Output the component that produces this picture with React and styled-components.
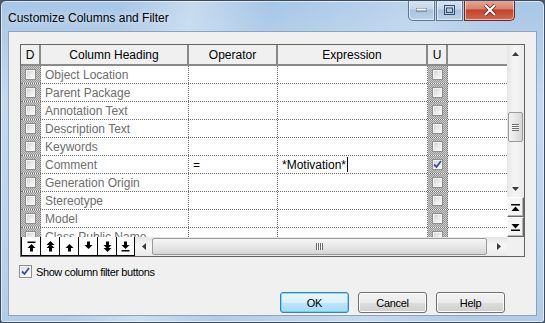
import styled, { createGlobalStyle, css } from 'styled-components'

const GlobalStyle = createGlobalStyle`
  html, body {
    margin: 0;
    padding: 0;
    background: #4a5a6c;
  }
  body {
    width: 545px;
    height: 323px;
    overflow: hidden;
    font-family: "Liberation Sans", Arial, sans-serif;
  }
`

const COLS = '20px 148px 89px 150px 20px 1fr'

const rows = [
  { name: 'Object Location' },
  { name: 'Parent Package' },
  { name: 'Annotation Text' },
  { name: 'Description Text' },
  { name: 'Keywords' },
  { name: 'Comment', op: '=', expr: '*Motivation*', u: true, editing: true },
  { name: 'Generation Origin' },
  { name: 'Stereotype' },
  { name: 'Model' },
  { name: 'Class Public Name' },
]

const Arrow = ({ kind }) => {
  const up = 'M4.5 3 L8.5 7 H6 V10.5 H3 V7 H0.5 Z'
  const shapes = {
    top: (
      <>
        <rect x="0.5" y="0.5" width="8" height="1.5" />
        <path d={up} />
      </>
    ),
    double: (
      <>
        <path d="M4.5 0 L8.5 4 H0.5 Z" />
        <path d={up} />
      </>
    ),
    one: <path d={up} />,
  }
  const flip = kind.startsWith('down')
  const base = kind.replace('down-', '').replace('up-', '')
  return (
    <svg width="9" height="11" viewBox="0 0 9 11" fill="#000">
      <g transform={flip ? 'translate(0 11) scale(1 -1)' : undefined}>{shapes[base]}</g>
    </svg>
  )
}

const Tri = ({ dir, size = 7 }) => {
  const d = {
    up: 'M0 4 L3.5 0 L7 4 Z',
    down: 'M0 0 L3.5 4 L7 0 Z',
    left: 'M4 0 L0 3.5 L4 7 Z',
    right: 'M0 0 L4 3.5 L0 7 Z',
  }[dir]
  const vertical = dir === 'up' || dir === 'down'
  return (
    <svg width={vertical ? size : 4} height={vertical ? 4 : size} viewBox={vertical ? '0 0 7 4' : '0 0 4 7'}>
      <path d={d} fill="#3a3a3a" />
    </svg>
  )
}

const Check = ({ size = 9 }) => (
  <svg width={size} height={size} viewBox="0 0 9 9">
    <path d="M1 4.5 L3.5 7 L8 1" fill="none" stroke="#3c4f8c" strokeWidth="1.8" />
  </svg>
)

const CaptionButtons = () => (
  <Captions>
    <Caption>
      <svg width="11" height="4"><rect x="0" y="0" width="11" height="3" fill="#fff" stroke="#3d4d63" strokeWidth="0.8" /></svg>
    </Caption>
    <Caption>
      <svg width="11" height="10"><rect x="0.5" y="0.5" width="10" height="9" fill="none" stroke="#3d4d63" strokeWidth="1" /><rect x="2.5" y="3" width="6" height="4.5" fill="none" stroke="#3d4d63" strokeWidth="1" /></svg>
    </Caption>
    <Caption $close>
      <svg width="14" height="12" viewBox="0 0 14 12">
        <path d="M2 1 L12 11 M12 1 L2 11" stroke="#5b1d15" strokeWidth="3.6" />
        <path d="M2 1 L12 11 M12 1 L2 11" stroke="#fff" strokeWidth="2.2" />
      </svg>
    </Caption>
  </Captions>
)

export default function App() {
  return (
    <>
      <GlobalStyle />
      <Window>
        <TitleBar>
          <Title>Customize Columns and Filter</Title>
          <CaptionButtons />
        </TitleBar>
        <Client>
          <Panel>
            <Viewport>
              <HeaderRow>
                <HeadCell>D</HeadCell>
                <HeadCell>Column Heading</HeadCell>
                <HeadCell>Operator</HeadCell>
                <HeadCell>Expression</HeadCell>
                <HeadCell>U</HeadCell>
                <HeadCell $last />
              </HeaderRow>
              {rows.map(r => (
                <Row key={r.name}>
                  <BoxCell><CellBox /></BoxCell>
                  <Cell $muted>{r.name}</Cell>
                  <Cell>{r.op}</Cell>
                  <Cell>
                    {r.expr}
                    {r.editing && <Caret />}
                  </Cell>
                  <BoxCell><CellBox>{r.u && <Check />}</CellBox></BoxCell>
                  <Cell $last />
                </Row>
              ))}
            </Viewport>
            <VScroll>
              <ArrowBtn><Tri dir="up" /></ArrowBtn>
              <VTrack><VThumb><Grip $vertical /></VThumb></VTrack>
              <ArrowBtn><Tri dir="down" /></ArrowBtn>
              <JumpBtn>
                <svg width="9" height="7" viewBox="0 0 9 7"><rect x="0" y="0" width="9" height="1.5" /><path d="M0.5 7 L4.5 2.5 L8.5 7 Z" /></svg>
              </JumpBtn>
              <JumpBtn>
                <svg width="9" height="7" viewBox="0 0 9 7"><path d="M0.5 0 L4.5 4.5 L8.5 0 Z" /><rect x="0" y="5.5" width="9" height="1.5" /></svg>
              </JumpBtn>
            </VScroll>
            <BottomBar>
              <NavButtons>
                {['up-top', 'up-double', 'up-one', 'down-one', 'down-double', 'down-top'].map(k => (
                  <NavBtn key={k}><Arrow kind={k} /></NavBtn>
                ))}
              </NavButtons>
              <HScroll>
                <ArrowBtn $h><Tri dir="left" /></ArrowBtn>
                <HTrack><HThumb><Grip /></HThumb></HTrack>
                <ArrowBtn $h><Tri dir="right" /></ArrowBtn>
              </HScroll>
            </BottomBar>
            <Corner />
          </Panel>
          <CheckRow>
            <CheckBox><Check /></CheckBox>
            <span>Show column filter buttons</span>
          </CheckRow>
          <Buttons>
            <Button $default>OK</Button>
            <Button>Cancel</Button>
            <Button>Help</Button>
          </Buttons>
        </Client>
      </Window>
    </>
  )
}

const Window = styled.div`
  width: 545px;
  height: 323px;
  box-sizing: border-box;
  display: flex;
  flex-direction: column;
  border: 1px solid #3c4c60;
  border-radius: 6px 6px 3px 3px;
  background:
    linear-gradient(100deg, rgba(255,255,255,0.0) 20%, rgba(255,255,255,0.35) 32%, rgba(255,255,255,0) 45%, rgba(255,255,255,0.25) 70%, rgba(255,255,255,0) 85%),
    linear-gradient(180deg, #a7c6e6 0%, #c3d9f0 30%, #bcd4ee 70%, #b2cce8 100%);
  box-shadow: inset 0 0 0 1px rgba(255,255,255,0.6);
  overflow: hidden;
`

const TitleBar = styled.div`
  height: 30px;
  display: flex;
  align-items: flex-start;
  flex-shrink: 0;
`

const Title = styled.div`
  font-size: 12px;
  color: #000;
  padding: 10px 0 0 7px;
  text-shadow: 0 0 6px rgba(255,255,255,0.9);
`

const Captions = styled.div`
  margin-left: auto;
  margin-right: 29px;
  margin-top: -1px;
  display: flex;
  gap: 1px;
  height: 21px;
`

const Caption = styled.div`
  width: 27px;
  box-sizing: border-box;
  display: flex;
  align-items: center;
  justify-content: center;
  border: 1px solid #5f7590;
  border-top: none;
  background: linear-gradient(180deg, #d7e5f4 0%, #c3d6ec 45%, #a9c2df 50%, #bcd2ea 100%);
  box-shadow: inset 0 0 0 1px rgba(255,255,255,0.55);
  &:first-child { border-bottom-left-radius: 5px; }
  ${p => p.$close && css`
    width: 51px;
    border-color: #6b2a20;
    border-bottom-right-radius: 5px;
    background: linear-gradient(180deg, #e9a99b 0%, #d7806d 45%, #c2412c 50%, #d1694f 100%);
  `}
`

const Client = styled.div`
  flex: 1;
  margin: 0 7px 6px 7px;
  border: 1px solid #8ba3bd;
  background: #f0f0f0;
  padding: 12px 0 0 11px;
  display: flex;
  flex-direction: column;
`

const Panel = styled.div`
  width: 505px;
  height: 213px;
  box-sizing: border-box;
  border: 1px solid #646464;
  display: grid;
  grid-template-columns: 486px 17px;
  grid-template-rows: 192px 19px;
  background: #fff;
`

const Viewport = styled.div`
  overflow: hidden;
  background: #fff;
`

const HeaderRow = styled.div`
  display: grid;
  grid-template-columns: ${COLS};
  height: 21px;
  box-sizing: border-box;
  border-bottom: 2px solid #8a8a8a;
  background: #f0f0f0;
`

const HeadCell = styled.div`
  display: flex;
  align-items: center;
  justify-content: center;
  font-size: 12px;
  color: #000;
  border-right: 2px solid #8a8a8a;
  ${p => p.$last && css`border-right: none;`}
`

const Row = styled.div`
  display: grid;
  grid-template-columns: ${COLS};
  height: 18px;
  box-sizing: border-box;
  border-bottom: 1px dotted #6f6f6f;
`

const Cell = styled.div`
  display: flex;
  align-items: center;
  padding-left: 4px;
  font-size: 12px;
  color: ${p => (p.$muted ? '#6d6d6d' : '#000')};
  border-right: 1px dotted #6f6f6f;
  white-space: nowrap;
  overflow: hidden;
  ${p => p.$last && css`border-right: none;`}
`

const Caret = styled.span`
  display: inline-block;
  width: 1px;
  height: 15px;
  background: #000;
  margin-left: 1px;
`

const BoxCell = styled.div`
  display: flex;
  align-items: center;
  justify-content: center;
  background: repeating-conic-gradient(#9a9a9a 0 25%, #c8c8c8 0 50%) 0 0 / 2px 2px;
  border-right: 1px dotted #6f6f6f;
`

const CellBox = styled.div`
  width: 11px;
  height: 11px;
  box-sizing: border-box;
  border: 1px solid #8e8e8e;
  background: linear-gradient(135deg, #d0d0d0 0%, #eeeeee 60%, #fbfbfb 100%);
  display: flex;
  align-items: center;
  justify-content: center;
  box-shadow: inset 0 0 0 1px #f4f4f4;
`

const VScroll = styled.div`
  display: flex;
  flex-direction: column;
  background: linear-gradient(90deg, #e6e6e6, #f4f4f4 40%, #f4f4f4 60%, #e9e9e9);
`

const ArrowBtn = styled.div`
  width: 17px;
  height: 17px;
  flex-shrink: 0;
  display: flex;
  align-items: center;
  justify-content: center;
  ${p => p.$h && css`height: 19px;`}
`

const VTrack = styled.div`
  flex: 1;
  padding-top: 50px;
`

const VThumb = styled.div`
  width: 15px;
  height: 30px;
  margin-left: 1px;
  box-sizing: border-box;
  border: 1px solid #9a9a9a;
  border-radius: 2px;
  background: linear-gradient(90deg, #f3f3f3, #e6e6e6 50%, #d6d6d6);
  display: flex;
  align-items: center;
  justify-content: center;
`

const Grip = styled.div`
  width: ${p => (p.$vertical ? '7px' : '7px')};
  height: 7px;
  background: ${p =>
    p.$vertical
      ? 'repeating-linear-gradient(180deg, #6c6c6c 0 1px, #f8f8f8 1px 2px)'
      : 'repeating-linear-gradient(90deg, #6c6c6c 0 1px, #f8f8f8 1px 2px)'};
`

const JumpBtn = styled.div`
  height: 20px;
  flex-shrink: 0;
  box-sizing: border-box;
  display: flex;
  align-items: center;
  justify-content: center;
  background: #f4f4f4;
  border: 1px solid #fff;
  border-right-color: #6a6a6a;
  border-bottom-color: #6a6a6a;
  box-shadow: inset -1px -1px 0 #b4b4b4;
  svg { fill: #000; }
`

const BottomBar = styled.div`
  display: flex;
  background: #f0f0f0;
`

const NavButtons = styled.div`
  display: flex;
  flex-shrink: 0;
  border-bottom: 1px solid #000;
`

const NavBtn = styled.div`
  width: 19px;
  height: 18px;
  box-sizing: border-box;
  border-left: 1px solid #000;
  background: #fff;
  display: flex;
  align-items: center;
  justify-content: center;
  &:last-child { border-right: 1px solid #000; }
`

const HScroll = styled.div`
  flex: 1;
  display: flex;
  background: linear-gradient(180deg, #e6e6e6, #f4f4f4 40%, #f4f4f4 60%, #e9e9e9);
`

const HTrack = styled.div`
  flex: 1;
  display: flex;
  align-items: center;
`

const HThumb = styled.div`
  width: 335px;
  height: 17px;
  box-sizing: border-box;
  border: 1px solid #9a9a9a;
  border-radius: 2px;
  background: linear-gradient(180deg, #f5f5f5, #e7e7e7 50%, #d5d5d5);
  display: flex;
  align-items: center;
  justify-content: center;
`

const Corner = styled.div`
  background: #f0f0f0;
`

const CheckRow = styled.div`
  display: flex;
  align-items: center;
  gap: 4px;
  margin-top: 8px;
  margin-left: -1px;
  font-size: 11px;
  letter-spacing: -0.4px;
  color: #000;
`

const CheckBox = styled.div`
  width: 13px;
  height: 13px;
  box-sizing: border-box;
  border: 1px solid #8e8f8f;
  background: linear-gradient(135deg, #dcdcdc 0%, #f2f2f2 60%, #fdfdfd 100%);
  box-shadow: inset 0 0 0 1px #f4f4f4;
  display: flex;
  align-items: center;
  justify-content: center;
`

const Buttons = styled.div`
  display: flex;
  justify-content: flex-end;
  gap: 9px;
  margin-top: 14px;
  padding-right: 31px;
`

const Button = styled.div`
  width: 69px;
  height: 21px;
  box-sizing: border-box;
  display: flex;
  align-items: center;
  justify-content: center;
  font-size: 11px;
  letter-spacing: -0.3px;
  color: #000;
  border: 1px solid #707070;
  border-radius: 3px;
  background: linear-gradient(180deg, #f2f2f2 0%, #ebebeb 50%, #dddddd 51%, #cfcfcf 100%);
  box-shadow: inset 0 0 0 1px #fcfcfc;
  ${p => p.$default && css`
    border-color: #3c7fb1;
    background: linear-gradient(180deg, #eaf6fd 0%, #d9f0fc 50%, #bee6fd 51%, #a7d9f5 100%);
    box-shadow: inset 0 0 0 1px #48d0f7aa;
  `}
`
